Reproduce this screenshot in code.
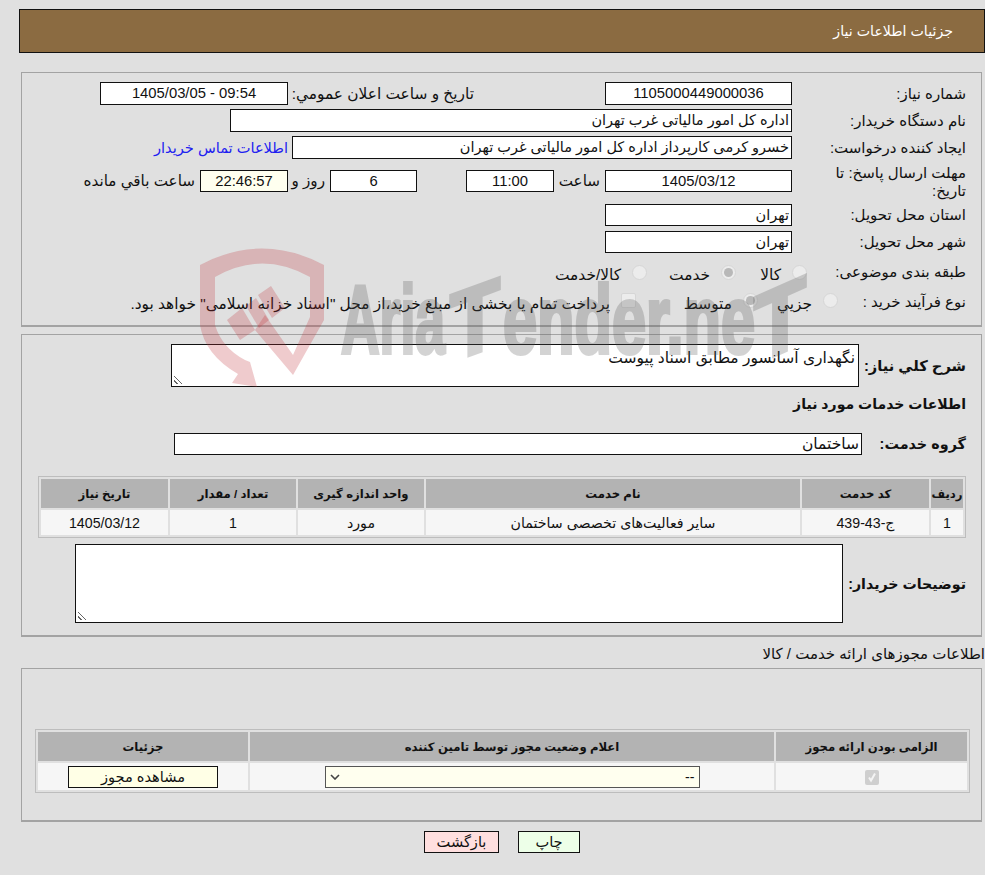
<div class="page" dir="rtl">
  <div class="head">جزئیات اطلاعات نیاز</div>

  <section class="box info">
    <div class="row r1">
      <span class="lbl">شماره نیاز:</span>
      <div class="fld w187 c">1105000449000036</div>
      <span class="lbl2">تاریخ و ساعت اعلان عمومي:</span>
      <div class="fld w188 c"><span dir="ltr">1405/03/05 - 09:54</span></div>
    </div>
    <div class="row">
      <span class="lbl">نام دستگاه خریدار:</span>
      <div class="fld buyer">اداره کل امور مالیاتی غرب تهران</div>
    </div>
    <div class="row r3">
      <span class="lbl">ایجاد کننده درخواست:</span>
      <div class="fld creator">خسرو کرمی کارپرداز اداره کل امور مالیاتی غرب تهران</div>
      <a class="link" href="#top">اطلاعات تماس خریدار</a>
    </div>
    <div class="row deadline">
      <span class="lbl tall">مهلت ارسال پاسخ: تا تاریخ:</span>
      <div class="fld w187 c short">1405/03/12</div>
      <span class="t saat">ساعت</span>
      <div class="fld w88 c short">11:00</div>
      <div class="fld w87 c short days">6</div>
      <span class="t rooz">روز و</span>
      <div class="fld w88 c short cream">22:46:57</div>
      <span class="t rest">ساعت باقي مانده</span>
    </div>
    <div class="row place">
      <span class="lbl">استان محل تحویل:</span>
      <div class="fld w187 short">تهران</div>
    </div>
    <div class="row place">
      <span class="lbl">شهر محل تحویل:</span>
      <div class="fld w187 short">تهران</div>
    </div>
    <div class="row radios subject">
      <span class="lbl">طبقه بندی موضوعی:</span>
      <span class="radio"></span><span class="rt w56">کالا</span>
      <span class="radio on"></span><span class="rt w74">خدمت</span>
      <span class="radio"></span><span class="rt">کالا/خدمت</span>
    </div>
    <div class="row radios process">
      <span class="lbl">نوع فرآیند خرید :</span>
      <span class="radio"></span><span class="rt w65">جزيي</span>
      <span class="radio on"></span><span class="rt w107">متوسط</span>
      <span class="check"></span>
      <span class="rt note">پرداخت تمام یا بخشی از مبلغ خرید،از محل "اسناد خزانه اسلامی" خواهد بود.</span>
    </div>
  </section>

  <section class="box detail">
    <div class="drow first">
      <span class="blbl">شرح کلي نیاز:</span>
      <div class="area a1">نگهداری آسانسور مطابق اسناد پیوست<span class="grip"></span></div>
    </div>
    <h3>اطلاعات خدمات مورد نیاز</h3>
    <div class="drow group">
      <span class="blbl">گروه خدمت:</span>
      <div class="fld groupf">ساختمان</div>
    </div>
    <table class="grid one">
      <thead>
        <tr><th class="k1">ردیف</th><th class="k2">کد خدمت</th><th>نام خدمت</th><th class="k4">واحد اندازه گیری</th><th class="k4">تعداد / مقدار</th><th class="k6">تاریخ نیاز</th></tr>
      </thead>
      <tbody>
        <tr><td>1</td><td>ج-43-439</td><td>سایر فعالیت‌های تخصصی ساختمان</td><td>مورد</td><td>1</td><td>1405/03/12</td></tr>
      </tbody>
    </table>
    <div class="drow notes">
      <span class="blbl">توضیحات خریدار:</span>
      <div class="area a2"><span class="grip"></span></div>
    </div>
  </section>

  <div class="lic-title">اطلاعات مجوزهای ارائه خدمت / کالا</div>
  <section class="box lic">
    <table class="grid two">
      <thead>
        <tr><th class="l1">الزامی بودن ارائه مجوز</th><th>اعلام وضعیت مجوز توسط تامین کننده</th><th class="l3">جزئیات</th></tr>
      </thead>
      <tbody>
        <tr>
          <td><span class="tick"><svg viewBox="0 0 12 12" width="12" height="12"><path d="M3 6.5l2 3 4-7" fill="none" stroke="#f4f4f4" stroke-width="2"/></svg></span></td>
          <td><div class="select"><span>--</span><svg viewBox="0 0 10 6" width="10" height="6"><path d="M1 1l4 4 4-4" fill="none" stroke="#444" stroke-width="1.6"/></svg></div></td>
          <td><div class="view">مشاهده مجوز</div></td>
        </tr>
      </tbody>
    </table>
  </section>

  <div class="actions">
    <div class="btn print">چاپ</div>
    <div class="btn back">بازگشت</div>
  </div>

  <!-- watermark sits over the form, cut off at the bottom of the first textarea -->
  <svg class="mark" viewBox="190 240 630 147" width="630" height="147" aria-hidden="true">
    <g fill="#c03038" fill-opacity="0.25">
      <path fill-rule="evenodd" d="M200 265 Q262 232 324 265 L324 320 L293 375 L255 330 L265 315 L293 355 L310 317 L310 277 Q262 250 215 277 L215 325 Q222 348 245 360 L250 362 L257 387 L232 383 L238 374 Q205 355 200 325 Z"/>
      <path d="M227 320 L242 308 L255 330 L240 340 Z"/>
      <path d="M246 306 L256 298 L269 320 L259 328 Z"/>
      <path d="M258 295 L271 286 L285 308 L272 318 Z"/>
    </g>
    <g class="wm">
      <text x="341" y="353" textLength="104" lengthAdjust="spacingAndGlyphs">Aria</text>
      <text transform="translate(475 353) skewY(-20)" text-anchor="middle" textLength="50" lengthAdjust="spacingAndGlyphs">T</text>
      <text x="503" y="353" textLength="252" lengthAdjust="spacingAndGlyphs">ender.ne</text>
      <text transform="translate(780 353) skewY(-24)" text-anchor="middle" textLength="52" lengthAdjust="spacingAndGlyphs">T</text>
    </g>
  </svg>
</div>

<style>
  :global(body) {
    margin: 0;
    background: #e0e0e0;
  }
  .page {
    position: relative;
    width: 985px;
    height: 875px;
    overflow: hidden;
    font-family: "Liberation Sans", "DejaVu Sans", sans-serif;
    font-size: 14.5px;
    color: #111;
    padding-top: 9px;
    box-sizing: border-box;
  }
  .head {
    margin-left: 19px;
    height: 42px;
    line-height: 42px;
    background: #8b6b41;
    border: 1px solid #111;
    color: #fff;
    font-size: 14.2px;
    padding-right: 31px;
  }
  .box {
    border: 1px solid #a3a3a3;
    border-bottom-width: 2px;
    margin: 0 3px 0 0;
    margin-left: 21px;
    box-sizing: border-box;
  }
  .info {
    margin-top: 19px;
    height: 255px;
    padding: 9px 15px 0 0;
  }
  .row {
    display: flex;
    align-items: center;
    height: 23px;
    margin-bottom: 4px;
    white-space: nowrap;
  }
  .lbl {
    width: 174px;
    flex: none;
    font-size: 15px;
  }
  .lbl.tall {
    white-space: normal;
    line-height: 18px;
    padding-left: 24px;
    box-sizing: border-box;
    margin-top: 2px;
  }
  .lbl2 {
    margin-right: 131px;
    width: 186px;
    flex: none;
    font-size: 15.4px;
  }
  .fld {
    background: #fff;
    border: 1px solid #111;
    box-sizing: border-box;
    height: 23px;
    line-height: 21px;
    padding: 0 2px;
    white-space: nowrap;
    overflow: hidden;
    flex: none;
  }
  .c { text-align: center; font-size: 14.8px; }
  .short { height: 22px; line-height: 20px; }
  .w187 { width: 187px; }
  .w188 { width: 188px; }
  .w88 { width: 88px; }
  .w87 { width: 87px; }
  .cream { background: #ffffef; }
  .buyer { width: 562px; }
  .creator { width: 500px; }
  .link {
    color: #2020f0;
    text-decoration: none;
    margin-right: 4px;
    font-size: 14.6px;
  }
  .r3 { margin-bottom: 11px; }
  .deadline {
    height: 22px;
    margin-bottom: 12px;
  }
  .t { flex: none; box-sizing: border-box; padding-right: 5px; font-size: 15.2px; }
  .saat { width: 51px; }
  .days { margin-right: 49px; }
  .rooz { width: 42px; }
  .place { height: 22px; margin-bottom: 5px; }
  .radios { height: 28px; margin-bottom: 0; }
  .process { margin-top: 2px; }
  .subject .lbl { width: 159px; }
  .process .lbl { width: 128px; }
  .radio {
    width: 15px;
    height: 15px;
    border-radius: 50%;
    background: #ececec;
    border: 1px solid #d6d6d6;
    box-sizing: border-box;
    flex: none;
    position: relative;
  }
  .radio.on::after {
    content: "";
    position: absolute;
    inset: 2px;
    border-radius: 50%;
    background: #b8b8b8;
  }
  .process .radio, .check { margin-top: -3px; }
  .rt {
    flex: none;
    box-sizing: border-box;
    padding: 6px 11px 0 0;
    font-size: 15.4px;
  }
  .process .rt { padding-top: 4px; }
  .w56 { width: 56px; }
  .w74 { width: 74px; }
  .w65 { width: 65px; }
  .w107 { width: 107px; }
  .check {
    width: 15px;
    height: 15px;
    background: #ececec;
    border: 1px solid #d6d6d6;
    border-radius: 2px;
    box-sizing: border-box;
    flex: none;
  }
  .detail {
    margin-top: 7px;
    height: 303px;
    padding: 9px 15px 0 0;
  }
  .drow { display: flex; align-items: center; }
  .blbl { font-weight: bold; font-size: 14.4px; white-space: nowrap; flex: none; }
  .first .blbl { width: 107px; font-size: 14.7px; }
  .area {
    position: relative;
    background: #fff;
    border: 1px solid #111;
    box-sizing: border-box;
    padding: 0 3px;
    flex: none;
    font-size: 15.5px;
  }
  .a1 { width: 688px; height: 43px; line-height: 26px; }
  .a2 { width: 768px; height: 79px; }
  .grip {
    position: absolute;
    left: 2px;
    bottom: 2px;
    width: 10px;
    height: 10px;
    background: repeating-linear-gradient(45deg, transparent 0 2px, #666 2px 3px);
    clip-path: polygon(0 0, 0 100%, 100% 100%);
  }
  h3 {
    margin: 4px 0 0;
    font-size: 14.05px;
    height: 27px;
    line-height: 27px;
  }
  .group { margin-top: 15px; }
  .group .blbl { width: 104px; }
  .groupf { width: 688px; height: 22px; line-height: 20px; font-size: 15.5px; }
  .grid {
    border: 1px solid #bdbdbd;
    border-spacing: 2px;
    box-sizing: border-box;
    table-layout: fixed;
    width: 928px;
  }
  .grid th {
    background: #b3b3b3;
    font-size: 11.7px;
    height: 29px;
    padding: 0;
  }
  .grid td {
    background: #f6f6f6;
    text-align: center;
    font-size: 14.2px;
    height: 25px;
    padding: 0;
  }
  .one { margin-top: 21px; }
  .k1 { width: 32px; }
  .k2 { width: 127px; }
  .k4 { width: 126px; }
  .k6 { width: 127px; }
  .notes { margin-top: 6px; }
  .notes .blbl { width: 123px; font-size: 14.2px; }
  .lic-title {
    margin-top: 8px;
    height: 23px;
    line-height: 18px;
    font-size: 15px;
    white-space: nowrap;
  }
  .lic { height: 154px; padding: 60px 11px 0 0; }
  .two { width: 935px; }
  .l1 { width: 191px; }
  .l3 { width: 210px; }
  .two td { height: 27px; }
  .tick {
    display: inline-flex;
    width: 14px;
    height: 15px;
    background: #cfcfcf;
    border-radius: 2px;
    vertical-align: middle;
    align-items: center;
    justify-content: center;
  }
  .select {
    display: flex;
    justify-content: space-between;
    align-items: center;
    width: 375px;
    height: 22px;
    box-sizing: border-box;
    border: 1px solid #555;
    background: #ffffef;
    margin: 0 auto;
    padding: 0 4px;
  }
  .view {
    width: 150px;
    height: 22px;
    line-height: 20px;
    box-sizing: border-box;
    border: 1px solid #111;
    background: #ffffe6;
    margin: 0 auto;
    font-size: 14.6px;
  }
  .actions {
    display: flex;
    justify-content: center;
    gap: 19px;
    margin-top: 9px;
    padding-left: 19px;
  }
  .btn {
    box-sizing: border-box;
    height: 22px;
    line-height: 20px;
    border: 1px solid #111;
    text-align: center;
    font-size: 14.6px;
  }
  .print { width: 62px; background: #edffe8; }
  .back { width: 75px; background: #ffdfdf; }
  .mark {
    position: absolute;
    left: 190px;
    top: 240px;
    pointer-events: none;
  }
  .wm {
    direction: ltr;
    font-family: "Liberation Sans", sans-serif;
    font-weight: bold;
    font-size: 96px;
    fill: #555;
    stroke: #555;
    stroke-width: 4px;
    opacity: 0.25;
  }
</style>
